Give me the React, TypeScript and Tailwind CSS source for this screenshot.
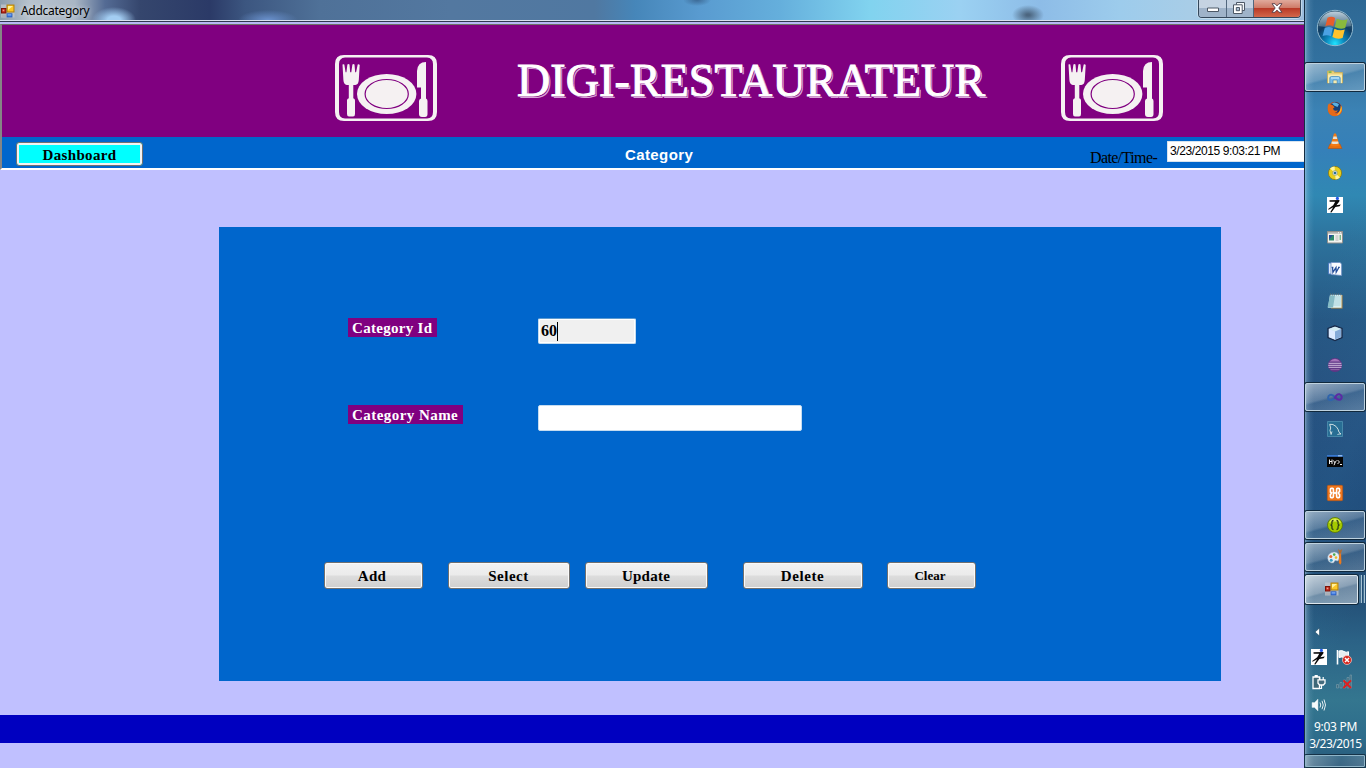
import React from "react";

const serif = "font-['Liberation_Serif',serif]";

function FormIcon({ className }: { className: string }) {
  return (
    <svg viewBox="0 0 14 14" className={className}>
      <rect x="0" y="0.5" width="13.5" height="13" fill="#c4c8cf" opacity="0.75" />
      <rect x="0.5" y="4.5" width="4.5" height="4.5" fill="#c02818" stroke="#7c1208" />
      <rect x="1.7" y="5.6" width="1.6" height="1.6" fill="#f0a090" />
      <rect x="6" y="1" width="7" height="7" fill="#fbc627" stroke="#a87b0c" />
      <path d="M7 2h5l-5 4z" fill="#fff2a0" />
      <rect x="6" y="9.8" width="5" height="3.2" fill="#3d78e0" stroke="#285ab8" strokeWidth="0.8" />
      <path d="M6.6 10.5h3.8v.8H6.6z" fill="#a5c8ff" />
      <path d="M0.5 10.5h4.5v2.5H.5z" fill="#aab0b8" />
    </svg>
  );
}

function PlateLogo({ className }: { className: string }) {
  return (
    <svg viewBox="0 0 102 66" className={className}>
      <path
        fill="#f5f1f2"
        fillRule="evenodd"
        d="M9 0H93Q102 0 102 9V57Q102 66 93 66H9Q0 66 0 57V9Q0 0 9 0ZM10 2.5Q4 3 4 9V57Q4 63 10 63.5H92Q98 63 98 57V9Q98 3 92 2.5Z"
      />
      <path
        fill="#f5f1f2"
        d="M7.5 9.5Q8.5 8.8 9.3 9.5L10.6 17.2H11.4L12.4 9.5Q13.5 8.5 14.5 9.5L15.2 17.2H16.3L17.4 9.5Q18.5 8.5 19.5 9.5L20.2 17.2H21.1L22.7 9.5Q23.9 8.7 24.7 10L23.8 25Q23.4 29.8 20.3 30H18.3V43.2Q20 43.5 20 45.5V59Q20 61.5 18 61.5H14Q12 61.5 12 59V45.5Q12 43.5 13.8 43.2V30H11.8Q8.7 29.5 8.4 25Z"
      />
      <path
        fill="#f5f1f2"
        d="M82 32.5V16Q82.5 7 91 7V43.5Q92.5 44 92.5 46V59Q92.5 62 90 62H87Q84 62 84 59V46Q84 44 86 43.5V32.5Z"
      />
      <ellipse cx="51.7" cy="39" rx="29.7" ry="20" fill="#f5f1f2" />
      <ellipse cx="51.7" cy="39" rx="21.6" ry="14.5" fill="none" stroke="#800080" strokeWidth="1.2" />
    </svg>
  );
}

const icon = "block h-4 w-4 overflow-visible";

const Explorer = () => (
  <svg viewBox="0 0 16 16" className={icon}>
    <path d="M0.5 2h6l1 1.5h8V14H.5z" fill="#e9cf78" stroke="#cfae50" strokeWidth=".7" />
    <path d="M1 5.5h14V14H1z" fill="#f8ebae" />
    <path d="M1.5 2.5h3v1.2h-3z" fill="#4fae3c" />
    <path d="M2.8 14.5V9Q3 7.5 4.5 7.5h7Q13 7.5 13.2 9v5.5h-3V11H6v3.5z" fill="#79bce8" stroke="#3e86bd" strokeWidth=".7" />
    <path d="M4 8.5h8v1H4z" fill="#d8f2ff" />
  </svg>
);
const Firefox = () => (
  <svg viewBox="0 0 16 16" className={icon}>
    <circle cx="8" cy="8" r="7.2" fill="#d84b16" />
    <circle cx="8.6" cy="6.4" r="5.4" fill="#173f76" />
    <path d="M5 2.2Q8.5 .6 12 3.2L10.5 6 7 4.6z" fill="#5cb1e0" />
    <path d="M1 4L2.2 2.2 3.2 3.8Q5 3.4 6 4.5L7.6 6.2 6 7.5Q6.4 10 9 9.8L10.8 9.2Q10 12 7.5 12 12 14 13.8 9L14.3 4.5Q16.6 10 12.5 13.8 7 17 2.5 13-.2 9 1 4z" fill="#e56a18" />
    <path d="M13.8 4.8Q15.8 8 13.4 11.4 11.8 13.8 9.6 14.4 13.4 11 13.8 4.8z" fill="#ffb72e" />
  </svg>
);
const Vlc = () => (
  <svg viewBox="0 0 16 16" className={icon}>
    <path d="M3 11h10l2 4.5H1z" fill="#e9700d" stroke="#b84c05" strokeWidth=".5" />
    <path d="M7 .5h2L12.5 12.5Q8 14.3 3.5 12.5z" fill="#f37b15" />
    <path d="M6.5 3.5h3l.8 2.4H5.8zM4.9 8.5h6.2l.6 2Q8 11.6 4.3 10.5z" fill="#e9e4d8" />
  </svg>
);
const Disc = () => (
  <svg viewBox="0 0 16 16" className={icon}>
    <circle cx="8" cy="8" r="6.6" fill="#e8cf1c" stroke="#8e780d" strokeWidth=".8" />
    <path d="M8 8L3 3.5Q5 1.5 7.6 1.6zM8 8l5 4.5Q11.6 14 8.6 14.4z" fill="#fff6a0" />
    <circle cx="8" cy="8" r="2.5" fill="#d5dce0" stroke="#8f9440" strokeWidth=".5" />
    <circle cx="8" cy="8" r="1.3" fill="#2b7298" />
  </svg>
);
const Runner = () => (
  <svg viewBox="0 0 16 16" className={icon}>
    <path d="M0 0h16v16H0z" fill="#fff" />
    <circle cx="10.4" cy="1.4" r="1.6" fill="#2458e8" />
    <path d="M2.5 3.2L12.5 3 12.3 4.4 9.4 8.2 13.8 7.6 12.6 9.2 8.4 10 4.4 15.5 3.2 15.2 6.2 10.2 1.6 12.8 1.2 12 6.2 8.2 8.2 4.8 2.6 4.8z" fill="#080808" />
  </svg>
);
const Panel = () => (
  <svg viewBox="0 0 16 16" className={icon}>
    <path d="M.5 2.5h15v11.5H.5z" fill="#f3f3ef" stroke="#91908d" />
    <path d="M1 3h14v1.7H1z" fill="#b5b4b1" />
    <path d="M11 3.3h1v1h-1zM13 3.3h1v1h-1z" fill="#fff" />
    <path d="M2 6h5v5.5H2z" fill="#2f8a6c" />
    <path d="M2 6h4L2 10.5z" fill="#244f9c" />
    <path d="M8.5 7h3M8.5 9h3M8.5 11h3" stroke="#a5a8a8" strokeWidth=".8" />
    <path d="M12.7 6h1v5h-1z" fill="#48a062" />
  </svg>
);
const Word = () => (
  <svg viewBox="0 0 16 16" className={icon}>
    <path d="M1.5 2h7v11h-7z" fill="#dbe7f7" stroke="#4977bd" strokeWidth=".9" />
    <path d="M4 1.5h9L14.6 3v11.5L4 13.5z" fill="#f9fbff" stroke="#6d8fc4" strokeWidth=".8" />
    <path d="M4.6 6.3h1.8M5.5 6.3l.4 5L9 6.6l.2 4.7L12 6.3M11 6.3h1.8" fill="none" stroke="#254f9b" strokeWidth="1.3" />
  </svg>
);
const Notepad = () => (
  <svg viewBox="0 0 16 16" className={icon}>
    <path d="M5 2h10.5v13.5H4z" fill="#bd8d45" />
    <path d="M3 1.7h11.5v13H1z" fill="#d8f0f3" />
    <path d="M3 2.5h5L6 14.5H.5z" fill="#83bac4" />
    <path d="M4 4h10M3.7 6h10.3M3.3 8h10.5M3 10h10.7M2.6 12h11" stroke="#8dbfcb" strokeWidth=".6" />
    <path d="M3.5.4v2M5.5.4v2M7.5.4v2M9.5.4v2M11.5.4v2M13.5.4v2" stroke="#5a6e75" strokeWidth=".8" />
  </svg>
);
const Cube = () => (
  <svg viewBox="0 0 16 16" className={icon}>
    <path d="M8 .8L15 3.5v9L8 15.5 1 12.5v-9z" fill="#bfd9ef" stroke="#172a4a" strokeWidth="1.3" />
    <path d="M8 1.7L14 4 8 6.5 2 4z" fill="#d5ecf2" />
    <path d="M8 6.5L14 4v8L8 14.5z" fill="#84aad7" />
    <path d="M2 4l6 2.5v8L2 12z" fill="#dceaff" />
  </svg>
);
const Eclipse = () => (
  <svg viewBox="0 0 16 16" className={icon}>
    <circle cx="8" cy="8" r="7.1" fill="#5f3685" />
    <path d="M2.6 4.6Q8-1 13.4 4.6z" fill="#a774ba" />
    <path d="M1.6 6.3h12.8M1.2 8.3h13.6M1.6 10.3h12.8" stroke="#dccbe8" strokeWidth=".9" />
    <path d="M3.5 12.6h9" stroke="#8f64a6" />
  </svg>
);
const Infinity = () => (
  <svg viewBox="0 0 16 16" className={icon}>
    <path d="M8.5 8.8Q5.8 5 3.2 5.9C.4 7 .4 10.4 3.3 11.1Q5.8 11.4 8 8.6" fill="none" stroke="#2f64ac" strokeWidth="2" />
    <path d="M7.4 9.6Q9.8 4.4 12.7 5.3C15.6 6.6 15.2 10.4 12.3 10.8Q10.3 10.8 8.5 8.6" fill="none" stroke="#5a2ba4" strokeWidth="2" />
  </svg>
);
const Dolphin = () => (
  <svg viewBox="0 0 16 16" className={icon}>
    <path d="M.5.5h15v15H.5z" fill="#286e94" stroke="#4f92b1" strokeWidth=".8" />
    <path d="M4.2 13.5L3 9.5 3.7 7 2.7 3.3Q6 2.7 9 5.4 11.5 8 12 11.2L14 13 11.5 13 10.5 14M5 10.5l-1 3" fill="none" stroke="#dce8e9" strokeWidth=".9" />
  </svg>
);
const Console = () => (
  <svg viewBox="0 0 16 16" className={icon}>
    <path d="M0 2h16v12H0z" fill="#050505" />
    <path d="M0 2h16v1.8H0z" fill="#3878d0" />
    <path d="M11 2.3h4v1h-4z" fill="#b1d3f6" />
    <path d="M2.5 11V6.5M5 11V6.5M2.5 8.5h2.5M6.5 7.5l1.4 2.4 1.5-2.4M8 9.8l-1 2.4M10.5 7l2 2-2 2M13 11.5h2" fill="none" stroke="#f1f1f1" strokeWidth="1" />
  </svg>
);
const Xampp = () => (
  <svg viewBox="0 0 16 16" className={icon}>
    <rect x=".3" y=".3" width="15.4" height="15.4" rx="1.3" fill="#ee761d" stroke="#ba520d" strokeWidth=".6" />
    <path d="M3.4 7V4.2Q3.4 3.4 4.2 3.4H5.6Q6.4 3.4 6.4 4.4V6.2Q6.4 8 8 8T9.6 6.2V4.4Q9.6 3.4 10.4 3.4H11.8Q12.6 3.4 12.6 4.2V6.4L11.2 8 12.6 9.6V11.8Q12.6 12.6 11.8 12.6H10.4Q9.6 12.6 9.6 11.6V9.8Q9.6 8 8 8T6.4 9.8V11.6Q6.4 12.6 5.6 12.6H4.2Q3.4 12.6 3.4 11.8V9.6L4.8 8z" fill="none" stroke="#fff" strokeWidth="1.6" />
  </svg>
);
const Braces = () => (
  <svg viewBox="0 0 16 16" className={icon}>
    <circle cx="8" cy="8" r="7.5" fill="#a5ca00" stroke="#55720b" strokeWidth=".8" />
    <path d="M2 6Q3 1.5 8 1.4 13 1.6 14 6 8 3 2 6z" fill="#dced4e" />
    <path d="M6.5 3.5Q4.5 3.6 5 6.5 5 8 3.5 8 5 8 5 10 4.5 12.3 6.5 12.5M9.5 3.5Q11.5 3.6 11 6.5 11 8 12.5 8 11 8 11 10 11.5 12.3 9.5 12.5" fill="none" stroke="#2d3e18" strokeWidth="1.3" />
  </svg>
);
const Paint = () => (
  <svg viewBox="0 0 16 16" className={icon}>
    <path d="M7 3Q.2 4 .7 9.6 1.6 14.8 6.6 13.8L8 11.5 11 12Q14 8 11 4.6 9.4 2.8 7 3z" fill="#e4edf5" stroke="#91a7bb" strokeWidth=".5" />
    <circle cx="3.8" cy="7.6" r="1.5" fill="#e66a32" />
    <circle cx="7.2" cy="5.6" r="1.3" fill="#51ab4e" />
    <circle cx="4.2" cy="11.2" r="1.5" fill="#359ac7" />
    <circle cx="9" cy="8.6" r="1.3" fill="#e8bb2d" />
    <path d="M11 0l2 1.4L15.2 0 14 4.6h-1.8z" fill="#b56a2c" />
    <path d="M12.2 4.6h1.9l.3 9.4-1.2 1.8-1.4-2z" fill="#eb791d" />
  </svg>
);

const tasks: { id: string; Icon: () => React.JSX.Element; open?: boolean }[] = [
  { id: "explorer", Icon: Explorer, open: true },
  { id: "firefox", Icon: Firefox },
  { id: "vlc", Icon: Vlc },
  { id: "disc", Icon: Disc },
  { id: "runner", Icon: Runner },
  { id: "panel", Icon: Panel },
  { id: "word", Icon: Word },
  { id: "notepad", Icon: Notepad },
  { id: "cube", Icon: Cube },
  { id: "eclipse", Icon: Eclipse },
  { id: "studio", Icon: Infinity, open: true },
  { id: "workbench", Icon: Dolphin },
  { id: "console", Icon: Console },
  { id: "xampp", Icon: Xampp },
  { id: "braces", Icon: Braces, open: true },
  { id: "paint", Icon: Paint, open: true },
];

const openFrame =
  "rounded-[2px] border border-[#bed2df] bg-[linear-gradient(165deg,#ffffff80_0%,#ffffff40_46%,#ffffff1c_52%,#ffffff38_100%)] shadow-[0_0_0_1px_#10283c]";

function StartOrb() {
  return (
    <svg viewBox="0 0 38 38" className="h-[38px] w-[38px]">
      <defs>
        <radialGradient id="orb" cx="50%" cy="94%" r="75%">
          <stop offset="0" stopColor="#20e3ff" />
          <stop offset=".35" stopColor="#0b86bb" />
          <stop offset=".75" stopColor="#103c63" />
          <stop offset="1" stopColor="#2b546f" />
        </radialGradient>
        <linearGradient id="gloss" x2="0" y2="1">
          <stop offset="0" stopColor="#d0dfea" stopOpacity=".9" />
          <stop offset="1" stopColor="#7794a7" stopOpacity=".5" />
        </linearGradient>
      </defs>
      <circle cx="19" cy="19" r="17.7" fill="url(#orb)" stroke="#8eb7ce" />
      <path d="M2.5 17Q5 3 19 2.5 33 3 35.5 17 20 20 2.5 17z" fill="url(#gloss)" />
      <path d="M11.5 8.8Q15.5 6.8 19.2 9L17.3 17.3Q13.5 15.3 9.3 17.2z" fill="#e75d2c" />
      <path d="M20.8 9.8Q26 12.4 31.5 10.3L29.2 19Q24 20.7 18.8 18z" fill="#89b93d" />
      <path d="M8.8 18.8Q13 17 16.9 19L14.9 27.2Q11 25.2 6.6 27z" fill="#4ba2e3" />
      <path d="M18.4 19.7Q23.3 22.2 28.8 20.6L26.6 29Q21.4 30.8 16.4 28z" fill="#ffc32c" />
    </svg>
  );
}

function Taskbar() {
  return (
    <aside className="flex h-full w-[62px] shrink-0 flex-col border-l border-[#142c42] bg-[linear-gradient(90deg,#b9d9ee90_0px,#b9d9ee40_2px,#b9d9ee18_5px,transparent_9px),linear-gradient(115deg,transparent_35%,#3f9ac51c_60%,transparent_80%),linear-gradient(180deg,#2e6894_0px,#32719f_60px,#3b82b4_110px,#3580b9_150px,#3088b3_195px,#2d729c_240px,#265783_320px,#264f7e_390px,#204b7a_500px,#224c74_590px,#2b6286_640px,#34768f_700px,#2d6c8b_740px,#265475_768px)]">
      <div className="flex h-[61px] items-center justify-center pb-[5px] pr-px">
        <StartOrb />
      </div>
      {tasks.map(({ id, Icon, open }) => (
        <div key={id} className="flex h-8 items-center">
          <div className={`flex h-[28px] w-[60px] items-center justify-center ${open ? openFrame : ""}`}>
            <Icon />
          </div>
        </div>
      ))}
      <div className="flex h-8 items-center gap-px">
        <div className="flex h-[29px] w-[53px] items-center justify-center rounded-[2px] border border-[#dce6ed] bg-[linear-gradient(165deg,#ffffffb8_0%,#ffffff78_50%,#ffffff58_55%,#ffffff70_100%)] shadow-[0_0_0_1px_#10283c]">
          <FormIcon className="h-[14px] w-[14px]" />
        </div>
        <div className="h-[28px] w-[3px] border-r border-[#a8c4d5] bg-[#446f8f]" />
        <div className="h-[28px] w-[2px] border-r border-[#a8c4d5] bg-[#446f8f]" />
      </div>
      <div className="flex h-[110px] flex-col pl-[6px]">
        <svg viewBox="0 0 8 10" className="ml-[2px] mt-[22px] h-[10px] w-2 shrink-0">
          <path d="M6.5 1v8L2 5z" fill="#fff" stroke="#1c4862" strokeWidth=".6" />
        </svg>
        <div className="mt-[12px] flex gap-[9px]">
          <div className="h-4 w-4"><Runner /></div>
          <svg viewBox="0 0 16 16" className="h-4 w-4">
            <path d="M1.5 1v14.5" stroke="#fff" strokeWidth="1.6" />
            <path d="M3 2Q6 1 8 2.5T12.5 2.7V9Q10 9.5 8 8.5T3 8.5z" fill="#e6edf0" stroke="#fff" />
            <circle cx="11" cy="11" r="4.5" fill="#d7271d" stroke="#fbd2cd" strokeWidth=".7" />
            <path d="M9 9l4 4m0-4l-4 4" stroke="#fff" strokeWidth="1.5" />
          </svg>
        </div>
        <div className="mt-[9px] flex gap-[9px]">
          <svg viewBox="0 0 16 16" className="h-4 w-4">
            <path d="M2 3h6.5v11.5H2z" fill="#3f6878" stroke="#fff" strokeWidth="1.3" />
            <path d="M3.6 1h3.2v2H3.6z" fill="#fff" />
            <path d="M7 5.8h7v3.4L12.3 11H8.7L7 9.2z" fill="#446b7d" stroke="#fff" strokeWidth="1.3" />
            <path d="M8.8 3v3M12.2 3v3M10.5 11v3.5H8.8" fill="none" stroke="#fff" strokeWidth="1.2" />
          </svg>
          <svg viewBox="0 0 16 16" className="h-4 w-4">
            <path d="M.5 10.5h2V14h-2zM4 8.5h2V14H4zM7.5 6h2v8h-2zM11 3.5h2V14h-2zM14 1h1.6v13H14z" fill="#3d6b80" stroke="#7d9fad" strokeWidth=".6" />
            <path d="M7.4 6.4l7.6 7.6m0-7.6l-7.6 7.6" stroke="#e11e1e" strokeWidth="2" />
          </svg>
        </div>
        <svg viewBox="0 0 16 16" className="mt-[7px] h-4 w-4 shrink-0">
          <path d="M1 5.5h2.5L7 2v12L3.5 10.5H1z" fill="#f6fafb" stroke="#c7dae2" strokeWidth=".5" />
          <path d="M9 5.5Q10.5 8 9 10.5M11 3.8Q13.5 8 11 12.2M13 2.5Q16 8 13 13.5" fill="none" stroke="#e6f0f3" strokeWidth="1" />
        </svg>
      </div>
      <div className="flex h-[40px] flex-col items-center pt-[3px] font-['Noto_Sans',sans-serif] text-[12px] leading-[17px] text-white">
        <span className="whitespace-nowrap tracking-[-0.3px]">9:03 PM</span>
        <span className="whitespace-nowrap tracking-[-0.5px]">3/23/2015</span>
      </div>
      <div className="mr-px h-[12px] rounded-[1px] border border-[#8fb5c8] bg-[linear-gradient(100deg,#ffffff55,#ffffff18_60%,#ffffff30)] shadow-[0_0_0_1px_#153348]" />
    </aside>
  );
}

function TitleBar() {
  return (
    <div className="flex h-[20px] shrink-0 items-start bg-[radial-gradient(ellipse_22px_13px_at_114px_20px,#a3cdf2_30%,transparent),radial-gradient(ellipse_30px_10px_at_268px_20px,#6a91cd_0%,transparent),radial-gradient(ellipse_16px_10px_at_1028px_15px,#4c6680_10%,transparent),radial-gradient(ellipse_14px_6px_at_697px_0px,#3f6f9c_10%,transparent),linear-gradient(90deg,#8b9dad_0px,#b8c3ce_30px,#a9b6c4_75px,#546b94_105px,#35466d_140px,#2b3a67_210px,#3c5680_245px,#4f7198_320px,#5378a0_450px,#5078a1_595px,#4686b9_635px,#599bd0_700px,#65afdc_780px,#81d3ef_870px,#9bd1f2_960px,#8dbce7_1040px,#9dccec_1120px,#a8cde7_1190px,#9cbddd_1304px)]">
      <FormIcon className="ml-[1px] mt-[4px] h-[14px] w-[14px]" />
      <span className="ml-[6px] mt-[3px] whitespace-nowrap font-['Noto_Sans',sans-serif] text-[12px] leading-[16px] tracking-[-0.3px] text-black [text-shadow:0_0_5px_#ffffffaa]">
        Addcategory
      </span>
      <div className="ml-auto mr-[3px] flex h-[18px] w-[103px] overflow-hidden rounded-b-[4px] border border-t-0 border-[#34475a] shadow-[0_0_0_1px_#d5e5f2aa]">
        <div className="flex w-[28px] items-center justify-center border-r border-[#52677d] bg-linear-to-b from-[#c5d3e2] from-45% to-[#9fb3c9] to-50%">
          <svg viewBox="0 0 12 6" className="mt-[3px] h-[6px] w-3">
            <path d="M.5 1h11v3.5H.5z" fill="#fff" stroke="#4d5866" />
          </svg>
        </div>
        <div className="flex w-[27px] items-center justify-center border-r border-[#52677d] bg-linear-to-b from-[#c5d3e2] from-45% to-[#9fb3c9] to-50%">
          <svg viewBox="0 0 12 12" className="mb-[2px] mr-[2px] h-3 w-3">
            <path d="M3.5.5h8v8h-8z" fill="#f5f8fb" stroke="#4d5866" />
            <path d="M.5 2.8h8.7v8.7H.5z" fill="#fff" stroke="#4d5866" />
            <path d="M3.3 5.5h3.2v3.2H3.3z" fill="#acbdd0" stroke="#4d5866" />
          </svg>
        </div>
        <div className="flex flex-1 items-center justify-center bg-[linear-gradient(180deg,#e0aa9c_0%,#cf7c69_45%,#b93a27_50%,#d2674b_100%)]">
          <svg viewBox="0 0 12 10" className="mb-[2px] h-[10px] w-3">
            <path d="M1 .7h3l2 2.2L8 .7h3L7.8 5 11 9.3H8L6 7.1 4 9.3H1L4.2 5z" fill="#fff" stroke="#56404a" strokeWidth=".9" />
          </svg>
        </div>
      </div>
    </div>
  );
}

function Header() {
  return (
    <header className="flex h-[146px] shrink-0 flex-col border-b-2 border-l-2 border-t border-b-white border-l-[#858585] border-t-[#6e7268] bg-[#0066cc]">
      <div className="flex h-[112px] shrink-0 bg-[#800080]">
        <PlateLogo className="ml-[333px] mt-[30px] h-[66px] w-[102px]" />
        <h1 className="ml-[80px] mt-[29px] w-[544px] whitespace-nowrap font-['Liberation_Serif',serif] text-[46px] leading-[54px] tracking-[0.1px] text-white [-webkit-text-stroke:1px_white] [text-shadow:1px_1px_0_#800080,2px_2px_0_#d9a5d9]">
          DIGI-RESTAURATEUR
        </h1>
        <PlateLogo className="mt-[30px] h-[66px] w-[102px]" />
      </div>
      <div className="flex h-[31px] items-start">
        <button className="ml-[14px] mt-[5px] flex h-[24px] w-[127px] items-center justify-center rounded-[3px] border border-[#707070] bg-[#00ffff] pt-[2px] font-['Liberation_Serif',serif] text-[15px] font-bold tracking-[0.35px] text-black shadow-[inset_0_0_0_2px_#f2f2f2]">
          Dashboard
        </button>
        <h2 className="ml-[482px] mt-[8px] w-[465px] font-['Liberation_Sans',sans-serif] text-[15px] font-bold leading-[20px] tracking-[0.4px] text-white">Category</h2>
        <span className={`mt-[11px] w-[77px] whitespace-nowrap text-[16px] leading-[20px] tracking-[-0.6px] text-black ${serif}`}>Date/Time-</span>
        <div className="mt-[4px] h-[21px] flex-1 whitespace-nowrap rounded-l-[1px] border border-r-0 border-[#d7e3ee] bg-white pl-[2px] font-['Liberation_Sans',sans-serif] text-[12px] leading-[18px] tracking-[-0.4px] text-black">
          3/23/2015 9:03:21 PM
        </div>
      </div>
    </header>
  );
}

const actions = [
  { label: "Add", box: "w-[99px] pr-[3px]", text: "text-[15px] tracking-[0.3px]" },
  { label: "Select", box: "ml-[25px] w-[122px] pr-px", text: "text-[15px] tracking-[0.5px]" },
  { label: "Update", box: "ml-[15px] w-[123px] pr-px", text: "text-[15px] tracking-[0.25px]" },
  { label: "Delete", box: "ml-[35px] w-[120px] pr-px", text: "text-[15px] tracking-[0.6px]" },
  { label: "Clear", box: "ml-[24px] w-[89px] pr-[3px]", text: "text-[13px]" },
];

const labelStyle =
  "flex h-[19px] items-center whitespace-nowrap bg-[#800080] pl-[4px] pt-px font-['Liberation_Serif',serif] text-[15px] font-bold text-white";

export default function App() {
  return (
    <div className="flex h-screen w-full overflow-hidden bg-[#c0c0ff]">
      <main className="flex h-full w-[1304px] shrink-0 flex-col">
        <TitleBar />
        <div className="h-[4px] shrink-0 border-b-2 border-t border-b-[#b8b8f5] border-t-[#d8e3ee] bg-[#303850]" />
        <Header />
        <section className="ml-[219px] mt-[57px] flex h-[454px] w-[1002px] shrink-0 flex-col bg-[#0066cc]">
          <div className="mt-[91px] flex h-[26px] items-start pl-[129px]">
            <div className="w-[190px]">
              <label className={`w-[89px] tracking-[0.3px] ${labelStyle}`}>Category Id</label>
            </div>
            <div className={`flex h-[26px] w-[98px] items-center rounded-[2px] border border-[#c5dcf0] border-t-[#5c9ad0] bg-[#f0f0f0] pl-[2px] text-[16px] font-bold text-black shadow-[inset_0_0_0_1px_white] ${serif}`}>
              60
              <i className="h-[19px] w-px bg-black" />
            </div>
          </div>
          <div className="mt-[61px] flex h-[26px] items-start pl-[129px]">
            <div className="w-[190px]">
              <label className={`w-[115px] tracking-[0.45px] ${labelStyle}`}>Category Name</label>
            </div>
            <div className="h-[26px] w-[264px] rounded-[2px] border border-[#c5dcf0] bg-white" />
          </div>
          <div className="mt-[131px] flex pl-[105px]">
            {actions.map((a) => (
              <button
                key={a.label}
                className={`flex h-[27px] items-center justify-center rounded-[3px] border border-[#707070] bg-[linear-gradient(180deg,#f2f2f2_0%,#ebebeb_49%,#dddddd_51%,#cfcfcf_100%)] pt-px font-bold text-black shadow-[inset_0_0_0_1px_#fafafa] ${serif} ${a.box} ${a.text}`}
              >
                {a.label}
              </button>
            ))}
          </div>
        </section>
        <footer className="mt-[34px] h-[28px] shrink-0 bg-[#0000c0]" />
      </main>
      <Taskbar />
    </div>
  );
}
